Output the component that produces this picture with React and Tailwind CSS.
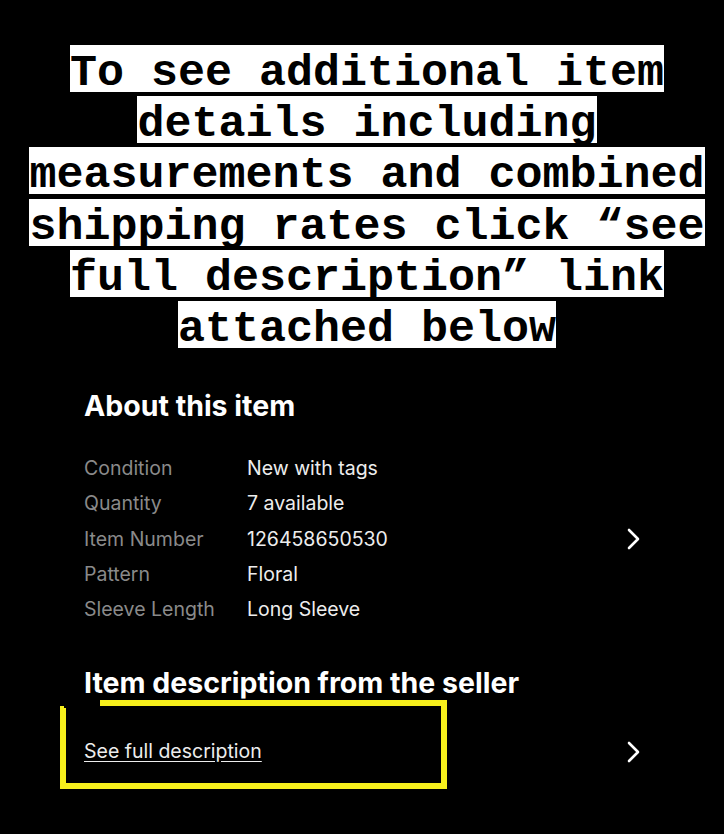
import React from 'react';

const banner = [
    'To see additional item',
    'details including',
    'measurements and combined',
    'shipping rates click \u201csee',
    'full description\u201d link',
    'attached below',
];

const specs = [
    ['Condition', 'New with tags'],
    ['Quantity', '7 available'],
    ['Item Number', '126458650530'],
    ['Pattern', 'Floral'],
    ['Sleeve Length', 'Long Sleeve'],
];

const Chevron = () => (
    <svg width="16" height="24" viewBox="0 0 16 24" className="shrink-0">
        <polyline points="3,3 12,12 3,21" fill="none" stroke="white" strokeWidth="2.6" strokeLinecap="round" strokeLinejoin="round" />
    </svg>
);

const App = () => {
    return (
        <div className="relative min-h-[834px] w-full overflow-hidden bg-black font-['Inter','Noto_Sans',sans-serif]">
            <div className="flex flex-col items-center gap-[4.2px] pl-[10px] pt-[45px]">
                {banner.map((line) => (
                    <span
                        key={line}
                        className="inline-block h-[47px] whitespace-pre bg-white font-['Liberation_Mono','Courier_New',monospace] text-[45px] font-bold leading-[58px] text-black"
                    >
                        {line}
                    </span>
                ))}
            </div>

            <div className="px-[84px] pt-[41px]">
                <h2 className="text-[28.5px] font-bold leading-[34px] text-white">About this item</h2>

                <div className="mt-[28px] flex items-center justify-between">
                    <div className="grid grid-cols-[163px_1fr]">
                        {specs.map(([label, value]) => (
                            <React.Fragment key={label}>
                                <span className="text-[19.5px] leading-[35.3px] text-[#8a8a8a]">{label}</span>
                                <span className="text-[19.5px] leading-[35.3px] text-[#ededed]">{value}</span>
                            </React.Fragment>
                        ))}
                    </div>
                    <div className="-mr-[2px]">
                        <Chevron />
                    </div>
                </div>

                <h2 className="mt-[39px] text-[28.5px] font-bold leading-[34px] text-white">
                    Item description from the seller
                </h2>

                <div className="mt-[34px] flex items-center justify-between">
                    <a href="#" className="text-[19.5px] leading-[35px] text-[#ededed] underline underline-offset-[3px]">
                        See full description
                    </a>
                    <div className="-mr-[2px]">
                        <Chevron />
                    </div>
                </div>
            </div>

            {/* hand-drawn highlight box */}
            <svg className="pointer-events-none absolute left-0 top-0" width="724" height="834" viewBox="0 0 724 834">
                <polyline
                    points="100,703 444,703 444,786 63,786 63,708"
                    fill="none"
                    stroke="#f7f01c"
                    strokeWidth="6"
                />
                <rect x="60" y="706" width="4" height="4" fill="#f7f01c" />
            </svg>
        </div>
    );
};

export default App;
